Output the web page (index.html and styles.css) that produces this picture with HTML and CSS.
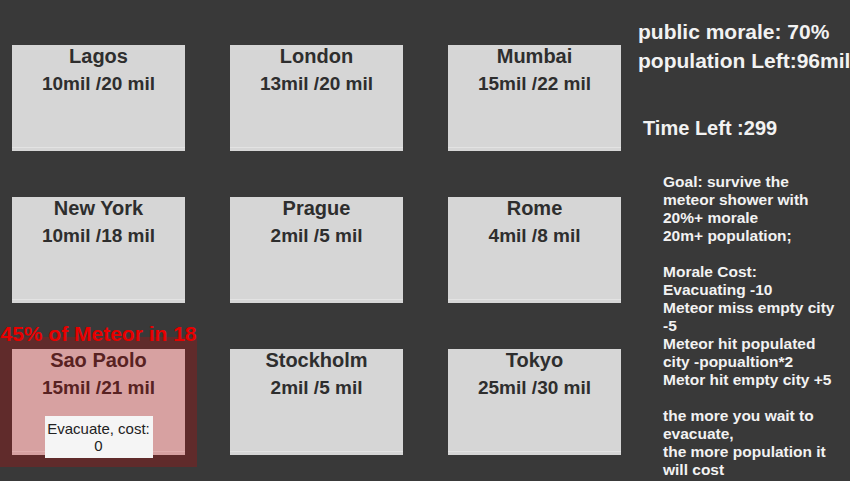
FILE: index.html
```html
<!DOCTYPE html>
<html lang="en">
<head>
    <meta charset="UTF-8">
    <meta name="viewport" content="width=device-width, initial-scale=1.0">
    <title>Meteor Shower</title>
    <link rel="stylesheet" href="styles.css">
</head>
<body>
    <div class="game">
        <div class="board">
            <div class="city">
                <div class="name">Lagos</div>
                <div class="pop">10mil /20 mil</div>
            </div>
            <div class="city">
                <div class="name">London</div>
                <div class="pop">13mil /20 mil</div>
            </div>
            <div class="city">
                <div class="name">Mumbai</div>
                <div class="pop">15mil /22 mil</div>
            </div>
            <div class="city">
                <div class="name">New York</div>
                <div class="pop">10mil /18 mil</div>
            </div>
            <div class="city">
                <div class="name">Prague</div>
                <div class="pop">2mil /5 mil</div>
            </div>
            <div class="city">
                <div class="name">Rome</div>
                <div class="pop">4mil /8 mil</div>
            </div>
            <div class="city targeted">
                <div class="warning">45% of Meteor in 18</div>
                <div class="name">Sao Paolo</div>
                <div class="pop">15mil /21 mil</div>
                <button class="evacuate">Evacuate, cost:<br>0</button>
            </div>
            <div class="city">
                <div class="name">Stockholm</div>
                <div class="pop">2mil /5 mil</div>
            </div>
            <div class="city">
                <div class="name">Tokyo</div>
                <div class="pop">25mil /30 mil</div>
            </div>
        </div>

        <div class="panel">
            <div class="stats">
                public morale: 70%<br>
                population Left:96mil
            </div>
            <div class="timer">Time Left :299</div>
            <div class="rules">
                Goal: survive the<br>
                meteor shower with<br>
                20%+ morale<br>
                20m+ population;<br>
                <br>
                Morale Cost:<br>
                Evacuating -10<br>
                Meteor miss empty city<br>
                -5<br>
                Meteor hit populated<br>
                city -popualtion*2<br>
                Metor hit empty city +5<br>
                <br>
                the more you wait to<br>
                evacuate,<br>
                the more population it<br>
                will cost
            </div>
        </div>
    </div>
</body>
</html>
```

FILE: styles.css
```css
* {
    margin: 0;
    padding: 0;
    box-sizing: border-box;
}
body {
    font-family: 'Liberation Sans', Arial, sans-serif;
    background: #393939;
    width: 850px;
    height: 481px;
    overflow: hidden;
}
.game {
    display: flex;
    align-items: flex-start;
}
.board {
    display: grid;
    grid-template-columns: repeat(3, 173px);
    grid-auto-rows: 106px;
    column-gap: 45px;
    row-gap: 46px;
    padding: 45px 0 0 12px;
    flex-shrink: 0;
}
.city {
    position: relative;
    display: flex;
    flex-direction: column;
    align-items: center;
    background: linear-gradient(to top, #d6d6d6 0 3px, #e3e3e3 3px 4px, #d6d6d6 4px);
    color: #2e2e2e;
    font-weight: bold;
}
.name {
    font-size: 20px;
    line-height: 22px;
}
.pop {
    font-size: 19px;
    line-height: 22px;
    margin-top: 6px;
}
.targeted {
    background: linear-gradient(to top, #d7a1a1 0 3px, #e0aeae 3px 4px, #d7a1a1 4px);
    color: #582222;
    box-shadow: 0 0 0 12px #602b2b;
}
.warning {
    position: absolute;
    bottom: calc(100% + 5px);
    left: 50%;
    transform: translateX(-50%);
    white-space: nowrap;
    color: #e80000;
    font-size: 21px;
    line-height: 21px;
}
.evacuate {
    width: 108px;
    margin-top: 17px;
    padding: 4px 2px;
    border: none;
    background: #f5f5f5;
    color: #222;
    font-family: 'Liberation Sans', Arial, sans-serif;
    font-size: 15px;
    line-height: 17px;
    font-weight: normal;
    text-align: center;
}
.panel {
    margin-left: 17px;
    color: #f2f2f2;
    font-weight: bold;
    white-space: nowrap;
}
.stats {
    font-size: 21px;
    line-height: 29px;
    padding-top: 17px;
}
.timer {
    font-size: 20px;
    line-height: 24px;
    margin-top: 41px;
    padding-left: 5px;
}
.rules {
    font-size: 15.5px;
    line-height: 18px;
    margin-top: 33px;
    padding-left: 25px;
}
```
